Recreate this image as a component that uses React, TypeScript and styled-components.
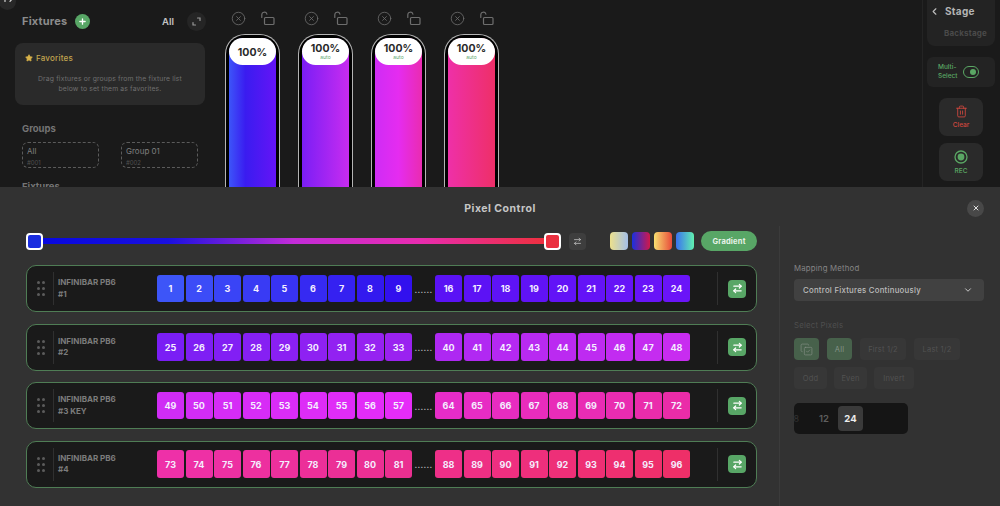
import React from 'react';
import styled, { createGlobalStyle } from 'styled-components';
import { ArrowRightLeft, ChevronDown, ChevronLeft, CircleX, CopyCheck, Plus, Star, Trash2, X } from 'lucide-react';

const GlobalStyle = createGlobalStyle`
  html, body {
    margin: 0;
    padding: 0;
    background: #1a1a1a;
    font-family: Inter, "Liberation Sans", sans-serif;
  }
  * { box-sizing: border-box; }
`;

const stops: [number, number[]][] = [
    [1, [61, 85, 248]],
    [9, [50, 16, 238]],
    [16, [90, 18, 245]],
    [24, [106, 20, 248]],
    [25, [122, 30, 245]],
    [33, [154, 34, 240]],
    [40, [174, 40, 242]],
    [48, [200, 44, 240]],
    [49, [207, 44, 245]],
    [57, [229, 44, 248]],
    [64, [230, 44, 200]],
    [72, [234, 44, 168]],
    [73, [238, 48, 168]],
    [81, [234, 47, 144]],
    [88, [238, 47, 136]],
    [96, [238, 47, 104]],
];

const pixelColor = (n: number) => {
    for (let i = 0; i < stops.length - 1; i++) {
        const [a, ca] = stops[i];
        const [b, cb] = stops[i + 1];
        if (n >= a && n <= b) {
            const t = (n - a) / (b - a);
            const c = ca.map((v, j) => Math.round(v + (cb[j] - v) * t));
            return `rgb(${c[0]}, ${c[1]}, ${c[2]})`;
        }
    }
    return 'rgb(238, 47, 104)';
};

const range = (from: number, to: number) => Array.from({ length: to - from + 1 }, (_, i) => from + i);

const faders = [
    { gradient: 'linear-gradient(90deg, #3d55f8, #3a1cf0 35%, #6414f6)', auto: false },
    { gradient: 'linear-gradient(90deg, #7a1ef5, #c82cf0)', auto: true },
    { gradient: 'linear-gradient(90deg, #cf2cf5, #e52cf0 50%, #ea2cb0)', auto: true },
    { gradient: 'linear-gradient(90deg, #ee30a8, #ee2f68)', auto: true },
];

const fixtures = [
    { name: '#1', start: 1 },
    { name: '#2', start: 25 },
    { name: '#3 KEY', start: 49 },
    { name: '#4', start: 73 },
];

const swatches = [
    'linear-gradient(90deg, #ece08c, #a4bfe8)',
    'linear-gradient(90deg, #1a30e0, #d0184a)',
    'linear-gradient(90deg, #f8e070, #e84a3a)',
    'linear-gradient(90deg, #3a70f0, #60f0b0)',
];

const OpenLock = () => (
    <svg width="15" height="15" viewBox="0 0 15 15" fill="none" stroke="#6e6e6e" strokeWidth="1.2">
        <rect x="4.5" y="6.5" width="9.5" height="7" rx="1" />
        <path d="M1.8 6.5V3.8a2.6 2.6 0 0 1 5.1-.7" strokeLinecap="round" />
    </svg>
);

const ExpandIcon = () => (
    <svg width="9" height="9" viewBox="0 0 9 9" fill="none" stroke="#9a9a9a" strokeWidth="1.2" strokeLinecap="round">
        <path d="M5.5 1H8v2.5M1 5.5V8h2.5" />
    </svg>
);

const RecordIcon = () => (
    <svg width="14" height="14" viewBox="0 0 14 14" fill="none" stroke="currentColor" strokeWidth="1.3">
        <circle cx="7" cy="7" r="6" />
        <circle cx="7" cy="7" r="3.4" fill="currentColor" stroke="none" />
    </svg>
);

const CornerGlyph = () => (
    <svg width="8" height="4" viewBox="0 0 8 4" fill="none" stroke="#d8d8d8" strokeWidth="1.2" strokeLinecap="round">
        <path d="M1 3.4V1.6M6 3.4l1.4-1.6" />
    </svg>
);

const GripDots = () => (
    <Grip>
        {range(1, 6).map(i => <Dot key={i} />)}
    </Grip>
);

const PixelCells = ({ from, to }: { from: number; to: number }) => (
    <CellGroup>
        {range(from, to).map(n => <Cell key={n} $color={pixelColor(n)}>{n}</Cell>)}
    </CellGroup>
);

export default function App() {
    return (
        <Page>
            <GlobalStyle />
            <CornerButton><CornerGlyph /></CornerButton>
            <Top>
                <FixturesPanel>
                    <PanelHeader>
                        <Heading>Fixtures</Heading>
                        <AddButton><Plus size={9} strokeWidth={3.5} color="#fff" /></AddButton>
                        <AllLabel>All</AllLabel>
                        <ExpandButton><ExpandIcon /></ExpandButton>
                    </PanelHeader>
                    <FavoritesCard>
                        <FavoritesTitle><Star size={8} fill="#d8b24a" color="#d8b24a" />Favorites</FavoritesTitle>
                        <FavoritesText>
                            Drag fixtures or groups from the fixture list<br />
                            below to set them as favorites.
                        </FavoritesText>
                    </FavoritesCard>
                    <SectionHeading>Groups</SectionHeading>
                    <GroupRow>
                        <GroupChip>All<GroupId>#001</GroupId></GroupChip>
                        <GroupChip>Group 01<GroupId>#002</GroupId></GroupChip>
                    </GroupRow>
                    <SectionHeading>Fixtures</SectionHeading>
                </FixturesPanel>

                <FaderBank>
                    {faders.map((f, i) => (
                        <FaderColumn key={i}>
                            <FaderIcons>
                                <CircleX size={15} strokeWidth={1.3} color="#6e6e6e" />
                                <OpenLock />
                            </FaderIcons>
                            <FaderBody>
                                <FaderFill $gradient={f.gradient}>
                                    <FaderLabel $auto={f.auto}>
                                        100%
                                        {f.auto && <AutoText>auto</AutoText>}
                                    </FaderLabel>
                                </FaderFill>
                            </FaderBody>
                        </FaderColumn>
                    ))}
                </FaderBank>

                <SideBar>
                    <StageCard>
                        <StageRow><ChevronLeft size={11} strokeWidth={2.5} color="#bdbdbd" />Stage</StageRow>
                        <BackstageText>Backstage</BackstageText>
                    </StageCard>
                    <MultiCard>
                        <MultiText>Multi-<br />Select</MultiText>
                        <Toggle><ToggleKnob /></Toggle>
                    </MultiCard>
                    <ActionButton $color="#d2483f">
                        <Trash2 size={13} strokeWidth={1.6} />
                        Clear
                    </ActionButton>
                    <ActionButton $color="#5aa764">
                        <RecordIcon />
                        REC
                    </ActionButton>
                </SideBar>
            </Top>

            <Sheet>
                <SheetHeader>
                    <span />
                    <SheetTitle>Pixel Control</SheetTitle>
                    <CloseButton><X size={8} strokeWidth={3} color="#e0e0e0" /></CloseButton>
                </SheetHeader>
                <SheetBody>
                    <MainColumn>
                        <SliderRow>
                            <SliderHandle $color="#1a2de0" />
                            <Track />
                            <SliderHandle $color="#ea3040" />
                            <SwapSmall><ArrowRightLeft size={9} strokeWidth={2.2} color="#bdbdbd" /></SwapSmall>
                            <Swatches>
                                {swatches.map(s => <Swatch key={s} $gradient={s} />)}
                            </Swatches>
                            <GradientPill>Gradient</GradientPill>
                        </SliderRow>
                        <FixtureList>
                            {fixtures.map(f => (
                                <FixtureRow key={f.name}>
                                    <GripDots />
                                    <RowDivider />
                                    <FixtureName>INFINIBAR PB6<br />{f.name}</FixtureName>
                                    <PixelCells from={f.start} to={f.start + 8} />
                                    <Ellipsis>......</Ellipsis>
                                    <PixelCells from={f.start + 15} to={f.start + 23} />
                                    <RowEnd>
                                        <RowDivider />
                                        <SwapButton><ArrowRightLeft size={11} strokeWidth={2.6} color="#fff" /></SwapButton>
                                    </RowEnd>
                                </FixtureRow>
                            ))}
                        </FixtureList>
                    </MainColumn>

                    <OptionsColumn>
                        <OptionLabel>Mapping Method</OptionLabel>
                        <SelectBox>
                            Control Fixtures Continuously
                            <ChevronDown size={10} strokeWidth={2.4} color="#c8c8c8" />
                        </SelectBox>
                        <DimLabel>Select Pixels</DimLabel>
                        <ChipRow>
                            <Chip $active $width={25}><CopyCheck size={13} strokeWidth={1.2} color="#858f87" /></Chip>
                            <Chip $active $width={25}>All</Chip>
                            <Chip $width={46}>First 1/2</Chip>
                            <Chip $width={46}>Last 1/2</Chip>
                        </ChipRow>
                        <ChipRow $gap={7}>
                            <Chip $width={33}>Odd</Chip>
                            <Chip $width={33}>Even</Chip>
                            <Chip $width={40}>Invert</Chip>
                        </ChipRow>
                        <CountPicker>
                            <CountClip>8</CountClip>
                            <CountOption>12</CountOption>
                            <CountSelected>24</CountSelected>
                        </CountPicker>
                    </OptionsColumn>
                </SheetBody>
            </Sheet>
        </Page>
    );
}

const Page = styled.div`
  position: relative;
  width: 1000px;
  height: 506px;
  overflow: hidden;
  display: flex;
  flex-direction: column;
  background: #1a1a1a;
`;

const CornerButton = styled.div`
  position: absolute;
  left: -1px;
  top: -7px;
  width: 17px;
  height: 17px;
  padding: 5px 0 0 5px;
  border-radius: 50%;
  background: #282828;
  display: flex;
  align-items: flex-start;
`;

const Top = styled.div`
  height: 187px;
  flex-shrink: 0;
  display: flex;
  overflow: hidden;
`;

const FixturesPanel = styled.div`
  width: 225px;
  flex-shrink: 0;
  padding: 12px 20px 0 15px;
`;

const PanelHeader = styled.div`
  height: 18px;
  display: flex;
  align-items: center;
  padding-left: 7px;
`;

const Heading = styled.h2`
  margin: 0;
  font-size: 11px;
  font-weight: 700;
  letter-spacing: 0.2px;
  color: #8c8c8c;
`;

const AddButton = styled.div`
  width: 15px;
  height: 15px;
  margin-left: 8px;
  border-radius: 50%;
  background: #58a666;
  display: flex;
  align-items: center;
  justify-content: center;
`;

const AllLabel = styled.span`
  margin-left: auto;
  font-size: 9.5px;
  font-weight: 600;
  color: #c4c4c4;
`;

const ExpandButton = styled.div`
  width: 19px;
  height: 19px;
  margin: 0 -1px 0 13px;
  border-radius: 50%;
  background: #252525;
  display: flex;
  align-items: center;
  justify-content: center;
`;

const FavoritesCard = styled.div`
  height: 62px;
  margin-top: 13px;
  padding: 10px 10px 0;
  border-radius: 8px;
  background: #2a2a2a;
`;

const FavoritesTitle = styled.div`
  display: flex;
  align-items: center;
  gap: 3px;
  font-size: 8px;
  font-weight: 500;
  letter-spacing: 0.2px;
  color: #c2a54f;
`;

const FavoritesText = styled.p`
  margin: 11px 0 0;
  font-size: 6.8px;
  line-height: 9.5px;
  letter-spacing: 0.15px;
  text-align: center;
  color: #6f6f6f;
`;

const SectionHeading = styled.h3`
  margin: 18px 0 0 7px;
  font-size: 9.5px;
  line-height: 12px;
  font-weight: 700;
  color: #747474;
`;

const GroupRow = styled.div`
  margin: 7px 7px 0;
  display: flex;
  justify-content: space-between;
  & + h3 { margin-top: 13px; }
`;

const GroupChip = styled.div`
  width: 77px;
  height: 26px;
  padding: 3px 4px;
  border: 1px dashed #5b5b5b;
  border-radius: 6px;
  font-size: 8px;
  line-height: 10px;
  font-weight: 400;
  color: #7f7f7f;
`;

const GroupId = styled.div`
  margin-top: 3px;
  font-size: 6px;
  line-height: 7px;
  font-weight: 400;
  color: #515151;
`;

const FaderBank = styled.div`
  display: flex;
  gap: 18px;
  flex: 1;
`;

const FaderColumn = styled.div`
  width: 55px;
  display: flex;
  flex-direction: column;
`;

const FaderIcons = styled.div`
  height: 34px;
  flex-shrink: 0;
  padding: 3px 0 0 6px;
  display: flex;
  align-items: center;
  gap: 14px;
`;

const FaderBody = styled.div`
  height: 170px;
  flex-shrink: 0;
  padding: 3px 3px 0;
  border: 1px solid #b4b4b4;
  border-bottom: none;
  border-radius: 20px 20px 0 0;
  background: #000;
`;

const FaderFill = styled.div<{ $gradient: string }>`
  height: 100%;
  border-radius: 15px 15px 0 0;
  background: ${p => p.$gradient};
`;

const FaderLabel = styled.div<{ $auto: boolean }>`
  height: 27px;
  border-radius: 14px;
  background: #fff;
  display: flex;
  flex-direction: column;
  align-items: center;
  justify-content: center;
  font-size: 10.5px;
  line-height: 11px;
  font-weight: 700;
  color: #2a2a2a;
  padding-top: ${p => (p.$auto ? 0 : 1)}px;
`;

const AutoText = styled.span`
  font-size: 5px;
  line-height: 6px;
  font-weight: 400;
  color: #62a96e;
`;

const SideBar = styled.div`
  width: 78px;
  flex-shrink: 0;
  padding-left: 4px;
  padding-right: 5px;
  border-left: 1px solid #242424;
  display: flex;
  flex-direction: column;
  align-items: center;
  gap: 7px;
`;

const StageCard = styled.div`
  width: 100%;
  height: 46px;
  margin-bottom: 4px;
  padding-top: 5px;
  border-radius: 0 0 8px 8px;
  background: #232323;
`;

const StageRow = styled.div`
  display: flex;
  align-items: center;
  gap: 5px;
  padding-left: 2px;
  font-size: 10px;
  font-weight: 700;
  letter-spacing: 0.3px;
  color: #b4b4b4;
`;

const BackstageText = styled.div`
  margin-top: 11px;
  padding-left: 17px;
  font-size: 8px;
  font-weight: 700;
  letter-spacing: 0.2px;
  color: #4a4a4a;
`;

const MultiCard = styled.div`
  width: 100%;
  height: 30px;
  margin-bottom: 4px;
  padding-left: 11px;
  border-radius: 6px;
  background: #232323;
  display: flex;
  align-items: center;
  gap: 6px;
`;

const MultiText = styled.div`
  font-size: 6.5px;
  line-height: 9px;
  font-weight: 500;
  color: #5aa764;
`;

const Toggle = styled.div`
  width: 16px;
  height: 12px;
  padding: 2px;
  border: 1.2px solid #5aa764;
  border-radius: 6px;
  display: flex;
  justify-content: flex-end;
`;

const ToggleKnob = styled.div`
  width: 6px;
  height: 6px;
  border-radius: 50%;
  background: #5aa764;
`;

const ActionButton = styled.div<{ $color: string }>`
  width: 44px;
  height: 38px;
  border-radius: 8px;
  background: #2a2a2a;
  display: flex;
  flex-direction: column;
  align-items: center;
  justify-content: center;
  gap: 3px;
  font-size: 6.5px;
  font-weight: 500;
  color: ${p => p.$color};
`;

const Sheet = styled.section`
  flex: 1;
  background: #323232;
  display: flex;
  flex-direction: column;
`;

const SheetHeader = styled.header`
  height: 39px;
  padding: 3px 16px 0;
  display: grid;
  grid-template-columns: 1fr auto 1fr;
  align-items: center;
  justify-items: end;
`;

const SheetTitle = styled.h1`
  margin: 0;
  font-size: 10.5px;
  font-weight: 700;
  letter-spacing: 0.5px;
  color: #c6c6c6;
`;

const CloseButton = styled.div`
  width: 17px;
  height: 17px;
  border-radius: 50%;
  background: #484848;
  display: flex;
  align-items: center;
  justify-content: center;
`;

const SheetBody = styled.div`
  flex: 1;
  display: flex;
`;

const MainColumn = styled.div`
  width: 779px;
  flex-shrink: 0;
  padding: 5px 22px 0 26px;
`;

const SliderRow = styled.div`
  height: 20px;
  display: flex;
  align-items: center;
`;

const SliderHandle = styled.div<{ $color: string }>`
  width: 17px;
  height: 17px;
  flex-shrink: 0;
  border: 2px solid #fff;
  border-radius: 4px;
  background: ${p => p.$color};
`;

const Track = styled.div`
  width: 501px;
  height: 6px;
  background: linear-gradient(90deg, #0808e0, #1a10e0 25%, #c32cd8 50%, #e82cb0 75%, #ee3040);
`;

const SwapSmall = styled.div`
  width: 17px;
  height: 17px;
  margin-left: 8px;
  border-radius: 4px;
  background: #3e3e3e;
  display: flex;
  align-items: center;
  justify-content: center;
`;

const Swatches = styled.div`
  margin: 0 7px 0 auto;
  display: flex;
  gap: 4px;
`;

const Swatch = styled.div<{ $gradient: string }>`
  width: 18px;
  height: 18px;
  border-radius: 4px;
  background: ${p => p.$gradient};
`;

const GradientPill = styled.div`
  width: 56px;
  height: 20px;
  border-radius: 10px;
  background: #58a666;
  display: flex;
  align-items: center;
  justify-content: center;
  font-size: 7.5px;
  font-weight: 700;
  letter-spacing: 0.2px;
  color: #e8f2e9;
`;

const FixtureList = styled.div`
  margin-top: 14px;
  display: flex;
  flex-direction: column;
  gap: 11.5px;
`;

const FixtureRow = styled.div`
  height: 47px;
  padding-left: 10px;
  border: 1px solid #4f7d55;
  border-radius: 10px;
  background: #1a1a1a;
  display: flex;
  align-items: center;
`;

const Grip = styled.div`
  width: 8px;
  display: grid;
  grid-template-columns: 3px 3px;
  gap: 3px 2px;
`;

const Dot = styled.span`
  width: 3px;
  height: 3px;
  border-radius: 50%;
  background: #5c5c5c;
`;

const RowDivider = styled.div`
  width: 1px;
  height: 33px;
  margin-left: 8px;
  background: #303030;
`;

const FixtureName = styled.div`
  width: 103px;
  padding-left: 4px;
  flex-shrink: 0;
  font-size: 8px;
  line-height: 11.5px;
  font-weight: 700;
  color: #7c7c7c;
`;

const CellGroup = styled.div`
  display: flex;
  gap: 1.5px;
`;

const Cell = styled.div<{ $color: string }>`
  width: 27px;
  height: 27.5px;
  border-radius: 3px;
  background: ${p => p.$color};
  display: flex;
  align-items: center;
  justify-content: center;
  font-size: 9px;
  font-weight: 700;
  color: #f4eeff;
`;

const Ellipsis = styled.div`
  width: 23px;
  padding-top: 2px;
  text-align: center;
  font-size: 8px;
  font-weight: 700;
  letter-spacing: 0.3px;
  color: #cfcfcf;
`;

const RowEnd = styled.div`
  margin-left: auto;
  padding-right: 10px;
  display: flex;
  align-items: center;
  gap: 10px;
`;

const SwapButton = styled.div`
  width: 18px;
  height: 18px;
  border-radius: 4px;
  background: #58a666;
  display: flex;
  align-items: center;
  justify-content: center;
`;

const OptionsColumn = styled.aside`
  flex: 1;
  padding: 37px 16px 0 14px;
  border-left: 1px solid #3b3b3b;
`;

const OptionLabel = styled.div`
  font-size: 7.8px;
  line-height: 10px;
  letter-spacing: 0.2px;
  color: #858585;
`;

const SelectBox = styled.div`
  height: 22px;
  margin-top: 6px;
  padding: 0 11px 0 9px;
  border-radius: 4px;
  background: #414141;
  display: flex;
  align-items: center;
  justify-content: space-between;
  font-size: 7.8px;
  font-weight: 500;
  letter-spacing: 0.25px;
  color: #bdbdbd;
`;

const DimLabel = styled.div`
  margin: 19px 0 8px;
  font-size: 7.8px;
  line-height: 10px;
  letter-spacing: 0.2px;
  color: #4e4e4e;
`;

const ChipRow = styled.div<{ $gap?: number }>`
  display: flex;
  gap: ${p => p.$gap ?? 8}px;
  margin-bottom: 7px;
`;

const Chip = styled.div<{ $active?: boolean; $width: number }>`
  width: ${p => p.$width}px;
  height: 22px;
  border-radius: 4px;
  background: ${p => (p.$active ? '#47614b' : '#373737')};
  display: flex;
  align-items: center;
  justify-content: center;
  font-size: 7.5px;
  letter-spacing: 0.2px;
  color: ${p => (p.$active ? '#859388' : '#525252')};
`;

const CountPicker = styled.div`
  width: 114px;
  height: 31px;
  margin-top: 14px;
  padding-right: 45px;
  overflow: hidden;
  border-radius: 5px;
  background: #151515;
  display: flex;
  align-items: center;
`;

const CountClip = styled.span`
  width: 5px;
  overflow: hidden;
  font-size: 9px;
  direction: rtl;
  color: #333;
`;

const CountOption = styled.span`
  width: 39px;
  padding-right: 9px;
  text-align: right;
  font-size: 9.5px;
  font-weight: 600;
  color: #5e5e5e;
`;

const CountSelected = styled.span`
  width: 25px;
  height: 25px;
  border-radius: 4px;
  background: #3a3a3a;
  display: flex;
  align-items: center;
  justify-content: center;
  font-size: 9.5px;
  font-weight: 700;
  color: #ececec;
`;
